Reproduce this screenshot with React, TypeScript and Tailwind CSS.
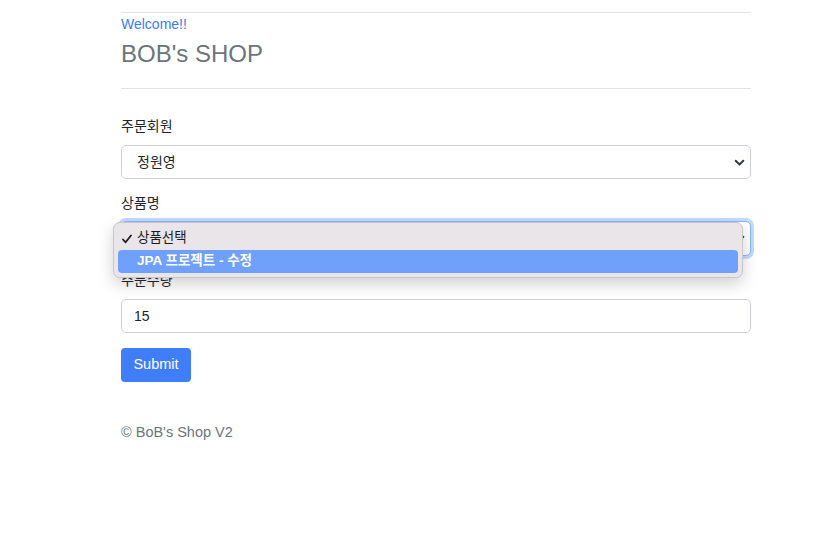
import React from 'react';

const font = { fontFamily: '"Liberation Sans", "Noto Sans CJK KR", sans-serif' };

const Chevron = () => (
  <svg width="11" height="11" viewBox="0 0 16 16" fill="none" className="shrink-0">
    <path d="M2.5 5.5l5.5 5.5 5.5-5.5" stroke="#3a3d42" strokeWidth="3" strokeLinecap="round" strokeLinejoin="round" />
  </svg>
);

export default function App() {
  return (
    <div className="min-h-[538px] w-[831px] bg-white text-[#212529]" style={font}>
      <div className="ml-[121px] w-[630px] pt-[12px]">
        <header className="flex flex-col border-y border-[#e3e3e3] pt-[1px] pb-[20px]">
          <span className="text-[14px] leading-[21px] text-[#3a7bf7]">Welcome!!</span>
          <h1 className="text-[24px] leading-[29px] text-[#6c757d] mt-[4px]">BOB's SHOP</h1>
        </header>

        <form className="mt-[27px] flex flex-col items-start" onSubmit={(e) => e.preventDefault()}>
          <label className="text-[14px] leading-[21px] mb-[8px]">주문회원</label>
          <div className="flex h-[34px] w-full items-center justify-between rounded-[5px] border border-[#cfd0d6] bg-white pl-[15px] pr-[5px] text-[14px]">
            <span>정원영</span>
            <Chevron />
          </div>

          <label className="text-[14px] leading-[21px] mt-[14px] mb-[7px]">상품명</label>
          <div className="relative w-full">
            <div className="flex h-[35px] items-center justify-end rounded-[5px] border border-[#86b7fe] bg-white pr-[5px] shadow-[0_0_0_3px_rgba(13,110,253,0.25)]">
              <Chevron />
            </div>
            <div className="absolute left-[-8px] top-[1px] z-10 flex h-[56px] w-[630px] flex-col rounded-[7px] border border-[#c9c6ca] bg-[#e9e5e9] px-[4px] pt-[4px] text-[13.5px] shadow-[0_6px_16px_rgba(0,0,0,0.18)]">
              <div className="flex h-[23px] items-center gap-[5px] pl-[4px] text-[#1d1d1f]">
                <svg width="10" height="10" viewBox="0 0 10 10" fill="none">
                  <path d="M1 5.5l2.6 2.8L9 1.5" stroke="#1d1d1f" strokeWidth="1.8" strokeLinecap="round" strokeLinejoin="round" />
                </svg>
                <span>상품선택</span>
              </div>
              <div className="flex h-[23px] items-center rounded-[4px] bg-[#6fa0fb] pl-[19px] font-bold text-white">
                JPA 프로젝트 - 수정
              </div>
            </div>
          </div>

          <label className="text-[14px] leading-[21px] mt-[14px] mb-[8px]">주문수량</label>
          <div className="flex h-[34px] w-full items-center rounded-[5px] border border-[#cfd0d6] bg-white pl-[12px] text-[14px]">
            <span>15</span>
          </div>

          <button type="submit" className="mt-[15px] h-[34px] w-[70px] rounded-[4px] bg-[#3f7ef8] text-[14.5px] text-white">
            Submit
          </button>
        </form>

        <footer className="mt-[40px] text-[14.5px] leading-[21px] text-[#6c757d]">© BoB's Shop V2</footer>
      </div>
    </div>
  );
}
